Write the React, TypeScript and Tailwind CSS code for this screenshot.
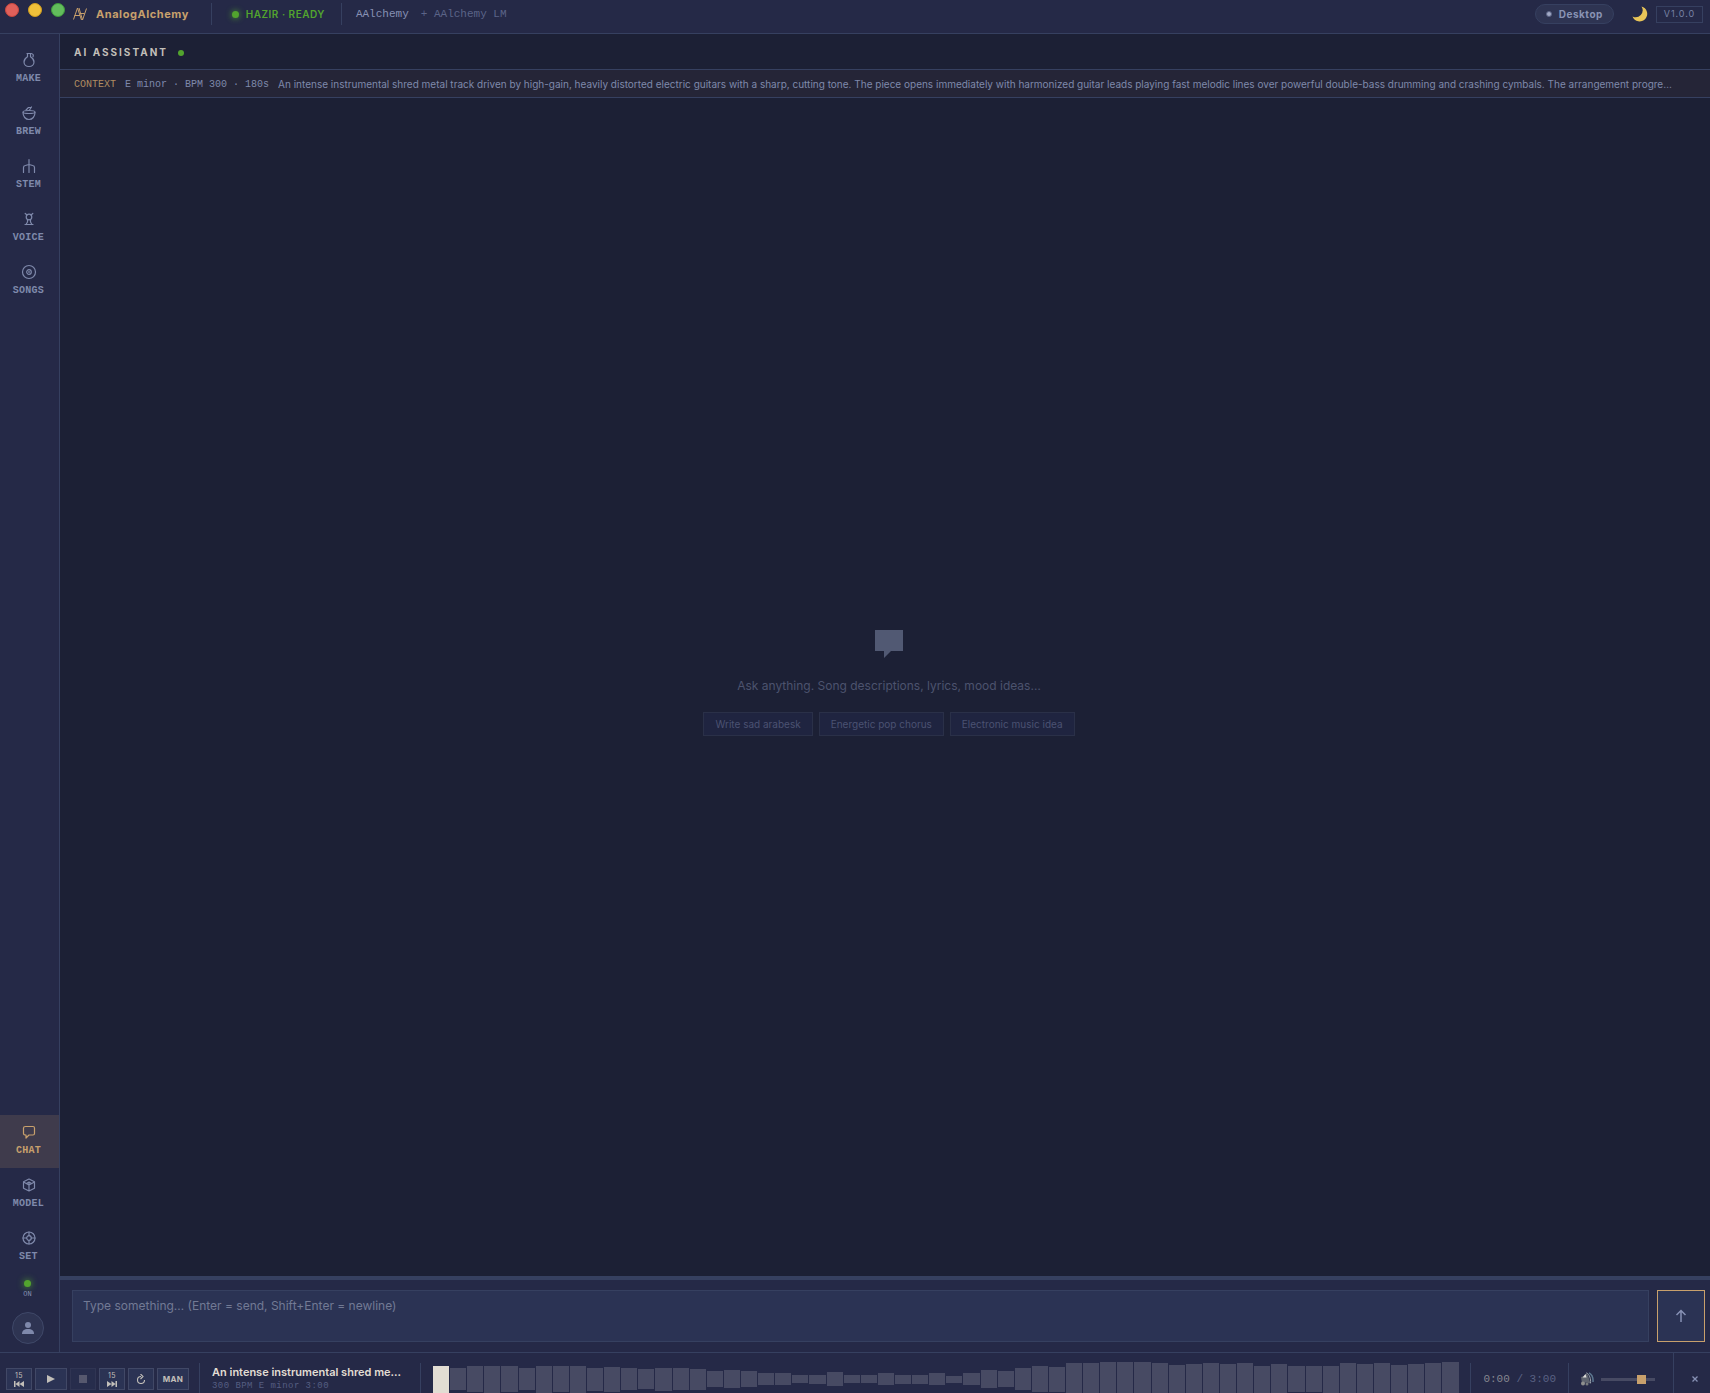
import React from 'react';

type NavItem = { label: string; icon: React.ReactNode; active?: boolean };

const Glyph: React.FC<{ children: React.ReactNode }> = ({ children }) => (
  <svg
    viewBox="0 0 16 16"
    className="h-4 w-4"
    fill="none"
    stroke="currentColor"
    strokeWidth="1.2"
    strokeLinecap="round"
    strokeLinejoin="round"
    aria-hidden="true"
  >
    {children}
  </svg>
);

const topNav: NavItem[] = [
  {
    label: 'MAKE',
    icon: (
      <Glyph>
        <path d="M6 1.5h4M6.5 1.5v3.2C4.3 6 3 7.800 3 10c0 2.700 2.200 4.500 5 4.500s5-1.800 5-4.500c0-2.200-1.300-4-3.500-5.300V1.500" />
        <path d="M10 1.500c2 .2 2.800 1.500 2 3.300" />
      </Glyph>
    ),
  },
  {
    label: 'BREW',
    icon: (
      <Glyph>
        <ellipse cx="8" cy="7" rx="6" ry="1.5" />
        <path d="M2 7.5c0 4 2.5 7 6 7s6-3 6-7M5 5l2.5-2.5h2M8.500 5l2-3" />
      </Glyph>
    ),
  },
  {
    label: 'STEM',
    icon: (
      <Glyph>
        <path d="M8 1.500v13M2.500 14.500V9.500c0-1.200.6-1.800 1.800-2L8 6.500l3.700 1c1.200.2 1.800.8 1.800 2v5" />
      </Glyph>
    ),
  },
  {
    label: 'VOICE',
    icon: (
      <Glyph>
        <circle cx="8" cy="6" r="2.8" />
        <path d="M4.200 2.500L6 4M11.800 2.500L10 4M6.500 8.500v2.500L5 13.500M9.500 8.500v2.500l1.500 2.500M4 13.500h8" />
      </Glyph>
    ),
  },
  {
    label: 'SONGS',
    icon: (
      <Glyph>
        <circle cx="8" cy="8" r="6.5" />
        <circle cx="8" cy="8" r="2.3" />
        <circle cx="8" cy="8" r="0.3" />
      </Glyph>
    ),
  },
];

const bottomNav: NavItem[] = [
  {
    label: 'CHAT',
    active: true,
    icon: (
      <Glyph>
        <path d="M4.500 2.500h7.500c1 0 1.500.5 1.500 1.500v5.500c0 1-.5 1.500-1.500 1.500H8l-3 3v-3C3.500 11 2.500 10.500 2.500 9.500V4c0-1 .7-1.500 2-1.500z" />
      </Glyph>
    ),
  },
  {
    label: 'MODEL',
    icon: (
      <Glyph>
        <path d="M8 2l5.500 2.800v6.400L8 14l-5.500-2.800V4.800zM2.500 5L8 8l5.500-3M8 5v9M5.500 6.500L8 5l2.500 1.500" />
      </Glyph>
    ),
  },
  {
    label: 'SET',
    icon: (
      <Glyph>
        <circle cx="8" cy="8" r="6" />
        <circle cx="8" cy="8" r="2.3" />
        <path d="M8 2v3.700M8 10.300V14M2 8h3.700M10.300 8H14" />
      </Glyph>
    ),
  },
];

const suggestions = ['Write sad arabesk', 'Energetic pop chorus', 'Electronic music idea'];

const waveform = [
  27, 22, 26, 27, 26, 22, 27, 26, 27, 23, 25, 22, 20, 23, 22, 21, 16, 18, 16, 12,
  12, 8, 9, 14, 8, 8, 12, 9, 9, 12, 7, 12, 18, 16, 22, 26, 25, 32, 32, 34,
  34, 34, 32, 29, 30, 32, 30, 32, 27, 30, 26, 26, 27, 32, 30, 32, 29, 30, 32, 34,
];

const NavButton: React.FC<{ item: NavItem }> = ({ item }) => (
  <button
    className={
      item.active
        ? 'flex h-[53px] w-full flex-col items-center justify-center gap-[5px] bg-[#3f3b4c] pr-[2px] pb-[3px] text-[#c8a06c]'
        : 'flex h-[53px] w-full flex-col items-center justify-center gap-[5px] pr-[2px] pb-[3px] text-[#7f89ab]'
    }
  >
    {item.icon}
    <span className="font-['Liberation_Mono',monospace] text-[10px] leading-3 font-bold tracking-wide">
      {item.label}
    </span>
  </button>
);

const Header: React.FC = () => (
  <header className="flex h-[34px] shrink-0 items-center border-b border-[#364060] bg-[#252947] pr-[7px] pb-[5px] pl-[5px]">
    <div className="flex gap-[9px] self-start pt-[3px]">
      <button aria-label="Close window" className="h-[14px] w-[14px] rounded-full border border-[#c9473f] bg-[#e0605a]" />
      <button aria-label="Minimize window" className="h-[14px] w-[14px] rounded-full border border-[#d19d1f] bg-[#efc03a]" />
      <button aria-label="Zoom window" className="h-[14px] w-[14px] rounded-full border border-[#3f9a3c] bg-[#62bd5c]" />
    </div>
    <svg viewBox="0 0 16 16" className="ml-[7px] h-4 w-4 text-[#c8a06c]" fill="none" stroke="currentColor" strokeWidth="1" aria-hidden="true">
      <path d="M1.500 13.500L5.500 2l4 12M2.500 9.500h5.500M7 2l3.500 12L14.500 2.500M8 7.500h4.500" />
    </svg>
    <h1 className="ml-2 text-[11px] font-bold tracking-wider text-[#c8a06c]">AnalogAlchemy</h1>
    <div className="ml-[22px] h-[22px] w-px bg-[#364060]" />
    <div className="ml-5 flex items-center gap-[7px] text-[#52a42e]">
      <span className="h-[7px] w-[7px] rounded-full bg-[#52a42e] shadow-[0_0_6px_#52a42e]" />
      <span className="text-[10px] font-semibold tracking-wider">HAZIR · READY</span>
    </div>
    <div className="ml-4 h-[22px] w-px bg-[#364060]" />
    <div className="ml-[14px] flex items-center gap-3 font-['Liberation_Mono',monospace] text-[11px] leading-4">
      <span className="text-[#8791b4]">AAlchemy</span>
      <span className="text-[#5b6488]">+ AAlchemy LM</span>
    </div>
    <div className="ml-auto flex items-center">
      <button className="flex h-5 items-center gap-[7px] rounded-full border border-[#364060] bg-[#2e3452] px-[10px] text-[10px] font-bold tracking-wider text-[#8993b4]">
        <span className="h-[6px] w-[6px] rounded-full border border-[#5b6486] bg-[#a3abc6]" />
        Desktop
      </button>
      <button aria-label="Dark mode" className="ml-[18px]">
        <svg viewBox="0 0 16 16" className="h-4 w-4" aria-hidden="true">
          <path d="M9.500.5A7.600 7.600 0 1 1 .5 10.500 7 7 0 0 0 9.500.5z" fill="#e9c558" />
        </svg>
      </button>
      <span className="ml-2 flex h-[17px] items-center border border-[#364060] px-[7px] text-[9px] tracking-widest text-[#7882a4]">
        V1.0.0
      </span>
    </div>
  </header>
);

const Sidebar: React.FC = () => (
  <nav className="flex w-[60px] shrink-0 flex-col border-r border-[#364060] bg-[#252947] pt-[9px] pb-2">
    {topNav.map((item) => (
      <NavButton key={item.label} item={item} />
    ))}
    <div className="flex-1" />
    {bottomNav.map((item) => (
      <NavButton key={item.label} item={item} />
    ))}
    <div className="flex flex-col items-center gap-[3px] pt-[6px] pr-1">
      <span className="h-[7px] w-[7px] rounded-full bg-[#52a42e] shadow-[0_0_7px_#52a42e]" />
      <span className="font-['Liberation_Mono',monospace] text-[7px] leading-2 text-[#8791b4]">ON</span>
    </div>
    <button aria-label="Account" className="mt-[14px] ml-3 flex h-8 w-8 items-center justify-center rounded-full border border-[#3f4868] bg-[#2e3452]">
      <svg viewBox="0 0 12 12" className="h-3 w-3" fill="#7f89ab" aria-hidden="true">
        <circle cx="6" cy="3" r="3" />
        <path d="M0 12c0-3.500 2-5 6-5s6 1.500 6 5z" />
      </svg>
    </button>
  </nav>
);

const Chat: React.FC = () => (
  <main className="flex min-w-0 flex-1 flex-col bg-[#1c2035]">
    <div className="flex h-9 shrink-0 items-center gap-[10px] border-b border-[#364060] px-[14px] pt-[2px]">
      <h2 className="text-[10px] font-bold tracking-[2px] text-[#c2bfb9]">AI ASSISTANT</h2>
      <span className="h-[6px] w-[6px] rounded-full bg-[#52a42e]" />
    </div>
    <div className="flex h-7 shrink-0 items-center gap-[9px] border-b border-[#364060] bg-[#252537] pt-[2px] pr-2 pl-[14px] text-[10px] text-[#7f89ab]">
      <span className="shrink-0 font-['Liberation_Mono',monospace] text-[#b08c61]">CONTEXT</span>
      <span className="shrink-0 font-['Liberation_Mono',monospace]">E minor · BPM 300 · 180s</span>
      <p className="truncate">
        An intense instrumental shred metal track driven by high-gain, heavily distorted electric guitars with a sharp, cutting tone. The piece opens immediately with harmonized guitar leads playing fast melodic lines over powerful double-bass drumming and crashing cymbals. The arrangement progre…
      </p>
    </div>
    <div className="flex flex-1 flex-col items-center justify-center pb-2 pl-2">
      <svg viewBox="0 0 28 28" className="h-7 w-7" aria-hidden="true">
        <path d="M0 0h28v21H16l-7 7v-7H0z" fill="#515973" />
      </svg>
      <p className="mt-5 text-[12px] leading-4 text-[#4c536e]">Ask anything. Song descriptions, lyrics, mood ideas…</p>
      <div className="mt-[18px] flex gap-[6px]">
        {suggestions.map((text) => (
          <button key={text} className="h-6 border border-[#2a3048] bg-[#1f2440] px-[11px] text-[10px] text-[#4b5272]">
            {text}
          </button>
        ))}
      </div>
    </div>
    <form className="flex shrink-0 gap-2 border-t-4 border-[#364060] bg-[#252947] py-[10px] pr-[5px] pl-3">
      <textarea
        aria-label="Message"
        placeholder="Type something… (Enter = send, Shift+Enter = newline)"
        className="block h-[52px] flex-1 resize-none border border-[#364060] bg-[#2b3354] px-[10px] py-[7px] text-[12px] leading-4 text-[#d8d5cf] outline-none placeholder:text-[#727a94]"
      />
      <button type="button" aria-label="Send" className="flex w-12 items-center justify-center border border-[#c8a06c] bg-[#2b3354] text-[#8791b4]">
        <svg viewBox="0 0 12 14" className="h-[14px] w-3" fill="none" stroke="currentColor" strokeWidth="1.5" aria-hidden="true">
          <path d="M6 13V1.500M1.500 6L6 1.500 10.500 6" />
        </svg>
      </button>
    </form>
  </main>
);

const control = 'flex h-[22px] flex-col items-center justify-center border border-[#414866] bg-[#2b3354] text-[#c2bfb9]';

const Player: React.FC = () => (
  <footer className="h-[41px] shrink-0 overflow-hidden border-t border-[#364060] bg-[#252947]">
    <div className="flex h-[52px] items-center pl-[6px]">
      <div className="flex gap-[3px]">
        <button aria-label="Back 15 seconds" className={`${control} w-[26px]`}>
          <span className="text-[7px] leading-2 tracking-wider">15</span>
          <svg viewBox="0 0 10 6" className="mt-px h-[6px] w-[10px]" fill="currentColor" aria-hidden="true">
            <path d="M0 0h1.500v6H0zM5.500 0v6l-4-3zM10 0v6L5.500 3z" />
          </svg>
        </button>
        <button aria-label="Play" className={`${control} w-8`}>
          <svg viewBox="0 0 8 8" className="h-2 w-2" fill="currentColor" aria-hidden="true">
            <path d="M0 0l8 4-8 4z" />
          </svg>
        </button>
        <button aria-label="Stop" disabled className={`${control} w-[26px] opacity-40`}>
          <span className="h-2 w-2 bg-[#9fa0a8]" />
        </button>
        <button aria-label="Forward 15 seconds" className={`${control} w-[26px]`}>
          <span className="text-[7px] leading-2 tracking-wider">15</span>
          <svg viewBox="0 0 10 6" className="mt-px h-[6px] w-[10px]" fill="currentColor" aria-hidden="true">
            <path d="M0 0l4.500 3L0 6zM4.500 0l4 3-4 3zM8.500 0H10v6H8.500z" />
          </svg>
        </button>
        <button aria-label="Repeat" className={`${control} w-[26px]`}>
          <svg viewBox="0 0 10 10" className="h-[10px] w-[10px]" fill="none" stroke="currentColor" strokeWidth="1.1" aria-hidden="true">
            <path d="M5 2.500A3.500 3.500 0 1 0 8.500 6M4.500 0L7 2.500 4.500 5" />
          </svg>
        </button>
        <button className={`${control} w-8 text-[8px] font-bold tracking-wider`}>MAN</button>
      </div>
      <div className="ml-[10px] h-8 w-px bg-[#364060]" />
      <div className="ml-3 w-[196px] pb-[2px]">
        <p className="text-[11px] leading-4 font-semibold whitespace-nowrap text-[#e2ddd3]">An intense instrumental shred me…</p>
        <p className="font-['Liberation_Mono',monospace] text-[9px] leading-3 tracking-wider text-[#555e82]">300 BPM E minor 3:00</p>
      </div>
      <div className="ml-3 h-8 w-px bg-[#364060]" />
      <div className="ml-3 flex h-9 flex-1 items-center gap-px">
        {waveform.map((height, i) => (
          <span key={i} className={i === 0 ? 'flex-1 bg-[#e2ddd3]' : 'flex-1 bg-[#474a63]'} style={{ height }} />
        ))}
      </div>
      <div className="ml-3 h-8 w-px bg-[#364060]" />
      <p className="ml-3 font-['Liberation_Mono',monospace] text-[11px] leading-4 text-[#5a6284]">
        <span className="text-[#85878f]">0:00</span> / 3:00
      </p>
      <div className="ml-3 h-8 w-px bg-[#364060]" />
      <svg viewBox="0 0 14 14" className="ml-[11px] h-[14px] w-[14px]" fill="none" aria-hidden="true">
        <path d="M1 5l3-1 3-3.500 3.500 11L6 10.500l-4 1z" fill="#5f646f" />
        <path d="M6.500.8c3 1.500 4.500 6 4 10.500" stroke="#9aa3ad" strokeWidth="1" />
        <path d="M9 .8c2.800 1.500 4.300 5.500 4 9.200" stroke="#5c7790" strokeWidth="1.500" />
        <circle cx="3" cy="11.5" r="2" fill="#8e8f8e" />
        <circle cx="7" cy="12" r="1.5" fill="#777a7c" />
        <path d="M2.500 5.500L5.500 2l1 3.500z" fill="#dddddb" />
      </svg>
      <input
        type="range"
        aria-label="Volume"
        min="0"
        max="100"
        defaultValue="80"
        className="ml-[7px] h-[3px] w-[54px] appearance-none bg-[#474a63] [&::-webkit-slider-thumb]:h-[9px] [&::-webkit-slider-thumb]:w-[9px] [&::-webkit-slider-thumb]:appearance-none [&::-webkit-slider-thumb]:bg-[#c8a06c]"
      />
      <button aria-label="Close player" className="ml-[18px] flex h-full w-[37px] items-center justify-center border-l border-[#364060] pl-[6px] text-[#8791b4]">
        <svg viewBox="0 0 6 6" className="h-[6px] w-[6px]" fill="none" stroke="currentColor" strokeWidth="1.3" aria-hidden="true">
          <path d="M.5.5l5 5M5.500.5l-5 5" />
        </svg>
      </button>
    </div>
  </footer>
);

const App: React.FC = () => (
  <div className="flex h-screen flex-col overflow-hidden bg-[#1c2035] font-['Inter',sans-serif]">
    <Header />
    <div className="flex min-h-0 flex-1">
      <Sidebar />
      <Chat />
    </div>
    <Player />
  </div>
);

export default App;
